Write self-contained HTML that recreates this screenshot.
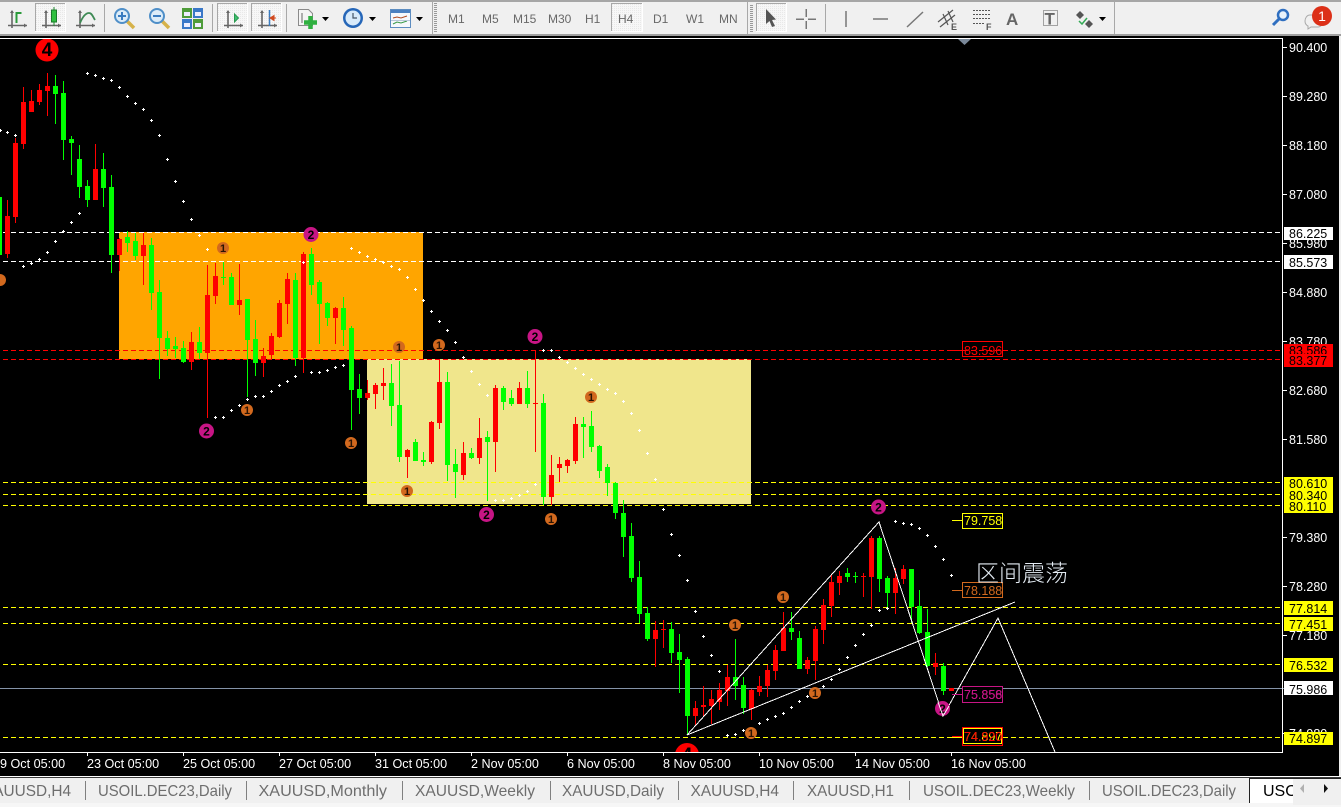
<!DOCTYPE html>
<html><head><meta charset="utf-8"><title>XAUUSD,H4</title>
<style>
html,body{margin:0;padding:0;background:#000;width:1341px;height:807px;overflow:hidden}
svg{display:block}
text{font-family:"Liberation Sans","Noto Sans CJK SC",sans-serif}
.ax{font-size:12.5px;fill:#fff}
.dt{font-size:12.6px;fill:#fff}
.bk{font-size:12.5px;fill:#000}
.tf{font-size:12px;fill:#686868}
.tab{font-size:16px;fill:#6e6e6e}
.n{font-size:11px;font-weight:bold;text-anchor:middle}
</style></head><body>
<svg width="1341" height="807" viewBox="0 0 1341 807" xmlns="http://www.w3.org/2000/svg">
<defs>
<marker id="d2" markerUnits="userSpaceOnUse" markerWidth="4" markerHeight="4" refX="1" refY="1" overflow="visible"><path d="M0 1.5h3M1.5 0v3" stroke="#fff" fill="none"/></marker>
<g id="a"><path d="M4 1v17M0 15.500h19" stroke="#666" stroke-width="1.600" fill="none"/><path d="M2 3l2-3 2 3zM16 13.500l3 2-3 2z" fill="#666"/></g>
<pattern id="dith" width="2" height="2" patternUnits="userSpaceOnUse"><rect width="2" height="2" fill="#f7f7f7"/><rect width="1" height="1" fill="#e8e8e8"/></pattern>
<clipPath id="cc"><rect x="0" y="39" width="1282" height="713"/></clipPath>
</defs>

<rect width="1341" height="807" fill="#000"/>

<g clip-path="url(#cc)">
<rect x="119" y="232" width="304" height="127" fill="#ffa500"/>
<rect x="367" y="359" width="384" height="145" fill="#f0e68c"/>

<g fill="none" stroke-dasharray="5 3" shape-rendering="crispEdges">
<path d="M3 232.500H1282M3 261.500H1282" stroke="#fff"/>
<path d="M3 350.500H1282M3 359.500H1282" stroke="#f00"/>
<path d="M3 482.500H1282M3 494.500H1282M3 505.500H1282M3 607.500H1282M3 623.500H1282M3 664.500H1282M3 737.500H1282" stroke="#ff0"/>
</g>
<path d="M0 688.500H1282" stroke="#8493a8" shape-rendering="crispEdges"/>

<g fill="none" shape-rendering="crispEdges">
<path stroke="#0f0" d="M-.5 190V255M55.500 75V124M63.500 81V160M71.500 136V175M79.500 145V198M87.500 180V207M103.500 153V207M111.500 175V273M127.500 231V252M135.500 233V260M151.500 238V310M159.500 280V379M167.500 331V356M175.500 337V358M183.500 341V363M199.500 327V359M223.500 262V285M231.500 273V305M247.500 299V397M255.500 320V376M295.500 273V366M311.500 248V295M319.500 280V344M327.500 302V326M343.500 297V346M351.500 326V430M359.500 374V414M391.500 364V426M399.500 361V462M415.500 439V461M423.500 452V466M447.500 372V481M455.500 449V498M471.500 448V459M487.500 431V501M503.500 386V410M511.500 390V406M527.500 371V408M543.500 394V505M583.500 417V458M591.500 411V452M599.500 445V478M607.500 464V496M615.500 482V519M623.500 500V557M631.500 523V582M639.500 561V623M647.500 607V641M671.500 622V663M679.500 634V693M687.500 657V735M735.500 639V700M743.500 677V714M791.500 612V640M799.500 631V669M847.500 568V582M855.500 572V583M879.500 536V592M887.500 576V607M911.500 569V623M919.500 590V634M927.500 609V667M943.500 663V695"/>
<path stroke="#f00" d="M7.500 200V258M15.500 138V223M23.500 87V149M31.500 90V112M39.500 84V105M47.500 73V116M95.500 144V200M119.500 238V271M143.500 233V285M191.500 332V370M207.500 265V418M215.500 263V304M239.500 264V315M263.500 348V377M271.500 333V360M279.500 300V338M287.500 273V324M303.500 252V373M335.500 307V344M367.500 380V400M375.500 383V409M383.500 368V400M407.500 449V478M431.500 421V464M439.500 359V429M463.500 442V480M479.500 418V464M495.500 385V472M519.500 382V404M535.500 350V452M551.500 455V505M559.500 457V482M567.500 459V473M575.500 417V464M655.500 621V667M663.500 620V648M695.500 701V726M703.500 686V717M711.500 690V724M719.500 683V710M727.500 665V706M751.500 689V720M759.500 676V696M767.500 665V697M775.500 645V680M783.500 612V651M807.500 657V674M815.500 626V680M823.500 599V644M831.500 575V617M839.500 571V595M863.500 573V597M871.500 536V609M895.500 568V614M903.500 565V584M935.500 653V675"/>
<path stroke="#0f0" stroke-width="5" d="M-.5 197V255M55.500 86V94M63.500 93V140M71.500 139V143M79.500 159V187M87.500 186V200M103.500 169V188M111.500 187V255M127.500 237V243M135.500 241V256M151.500 245V293M159.500 292V338M167.500 338V349M175.500 346V349M183.500 348V362M199.500 342V353M231.500 277V305M247.500 299V340M255.500 339V363M295.500 280V358M311.500 254V285M319.500 282V304M327.500 303V318M343.500 308V330M351.500 328V390M359.500 389V398M391.500 383V406M399.500 405V457M415.500 442V461M423.500 460V462M447.500 382V465M455.500 464V472M471.500 453V458M487.500 437V442M503.500 388V402M511.500 398V404M527.500 388V404M543.500 403V497M583.500 424V427M591.500 426V447M599.500 446V471M607.500 467V483M615.500 483V513M623.500 513V537M631.500 536V578M639.500 577V614M647.500 613V639M671.500 629V653M679.500 652V660M687.500 659V716M735.500 677V686M743.500 685V708M791.500 628V632M799.500 638V669M847.500 573V577M879.500 538V579M887.500 578V593M911.500 569V607M919.500 606V633M927.500 632V666M943.500 666V691"/>
<path stroke="#0f0" stroke-width="5" d="M223.500 277V278M855.500 576V577"/>
<path stroke="#f00" stroke-width="5" d="M7.500 216V254M15.500 143V217M23.500 102V144M31.500 101V112M39.500 90V102M47.500 86V91M95.500 169V200M119.500 239V255M143.500 245V256M191.500 342V362M207.500 295V353M215.500 276V296M239.500 300V305M263.500 356V363M271.500 336V355M279.500 303V337M287.500 279V304M303.500 254V358M335.500 308V318M367.500 393V398M375.500 385V394M383.500 383V386M407.500 450V457M431.500 422V462M439.500 382V423M463.500 453V475M479.500 438V458M495.500 388V442M519.500 388V404M535.500 403V404M551.500 475V497M559.500 464V468M567.500 460V466M575.500 424V461M655.500 630V639M663.500 629V630M695.500 708V716M703.500 705V707M711.500 699V706M719.500 690V702M727.500 677V691M751.500 690V709M759.500 686V692M767.500 670V686M775.500 650V671M783.500 628V651M807.500 660V669M815.500 629V661M823.500 605V630M831.500 582V606M839.500 576V583M863.500 576V577M871.500 538V577M895.500 578V593M903.500 569V579M935.500 663V667M951.500 688V691"/>
</g>

<path fill="none" stroke="none" marker-start="url(#d2)" marker-mid="url(#d2)" marker-end="url(#d2)" d="M0 130L7 132L15 135M87 73L95 75L103 78L111 80L119 87L127 96L135 103L143 109L151 120L159 135L167 159L175 181L183 201L191 219L199 235L207 249M23 266L31 263L39 259L47 252L55 241L63 231L71 222L79 213M215 417L223 417L231 410L239 405L247 399L255 396L263 396L271 391L279 385L287 381L295 376L303 262L311 372L319 372L327 370L335 367L343 365M351 248L359 252L367 256L375 259L383 262L391 266L399 269L407 277L415 289L423 300L431 311L439 321L447 330L455 342L463 357L471 371L479 384L487 395M495 500L503 500L511 498L519 495L527 491L535 484M543 350L551 350L559 357L567 362L575 368L583 374L591 379L599 384L607 389L615 393L623 401L631 413L639 430L647 453L655 479L663 509L671 534L679 555L687 580L695 611L703 636L711 655L719 671M727 735L735 734L743 730L759 723L767 719L775 716L783 713L791 707L799 701L807 696L823 686L831 679L839 669L847 657L855 645L863 634L871 625L879 610L887 608M895 521L903 523L911 524L919 528L927 535L935 546L943 559L951 575"/>

<g fill="none" stroke="#fff" shape-rendering="crispEdges">
<path d="M687 735L879 522L943 716L998 618L1055 752"/>
<path d="M687 735L1015 602"/>
</g>

<g>
<circle cx="47" cy="50" r="11.500" fill="#f00"/><text x="47" y="56" font-size="19" font-weight="bold" text-anchor="middle" fill="#000">4</text>
<circle cx="687" cy="755" r="12" fill="#f00"/><text x="687" y="761" font-size="19" font-weight="bold" text-anchor="middle" fill="#000">4</text>
</g>
<g fill="#c71585">
<circle cx="311" cy="234.500" r="7.500"/><circle cx="206.500" cy="431" r="7.500"/><circle cx="535" cy="336.500" r="7.500"/><circle cx="486.500" cy="514.500" r="7.500"/><circle cx="878.500" cy="507" r="7.500"/><circle cx="942.500" cy="708.500" r="7.500"/>
</g>
<g>
<text class="n" style="font-size:12px" x="311" y="239">2</text><text class="n" style="font-size:12px" x="206.500" y="435.500">2</text><text class="n" style="font-size:12px" x="535" y="341">2</text><text class="n" style="font-size:12px" x="486.500" y="519">2</text><text class="n" style="font-size:12px" x="878.500" y="511.500">2</text><text class="n" style="font-size:12px" x="942.500" y="713">2</text>
</g>
<path d="M943 716L938 702M943 716L949 706" stroke="#fff" fill="none"/>
<g fill="#d2691e">
<circle cx="223" cy="248" r="6"/><circle cx="399" cy="347" r="6"/><circle cx="439" cy="345" r="6"/><circle cx="247" cy="410" r="6"/><circle cx="351" cy="443" r="6"/><circle cx="0" cy="280" r="6"/><circle cx="591" cy="397" r="6"/><circle cx="407" cy="491" r="6"/><circle cx="551" cy="519" r="6"/><circle cx="783" cy="597" r="6"/><circle cx="735" cy="625" r="6"/><circle cx="815" cy="693" r="6"/><circle cx="751" cy="733" r="6"/>
</g>
<g fill="#2a1404">
<text class="n" x="223" y="252">1</text><text class="n" x="399" y="351">1</text><text class="n" x="439" y="349">1</text><text class="n" x="247" y="414">1</text><text class="n" x="351" y="447">1</text><text class="n" x="591" y="401">1</text><text class="n" x="407" y="495">1</text><text class="n" x="551" y="523">1</text><text class="n" x="783" y="601">1</text><text class="n" x="735" y="629">1</text><text class="n" x="815" y="697">1</text><text class="n" x="751" y="733" dy="4">1</text>
</g>

<!-- inner price labels -->
<g shape-rendering="crispEdges" fill="#000" stroke-width="1">
<path d="M952 350.500h10" stroke="#f00"/><rect x="962.500" y="341.500" width="40" height="15" stroke="#f00" fill="none"/>
<path d="M952 520.500h10" stroke="#ff0"/><rect x="962.500" y="513.500" width="40" height="15" stroke="#ff0"/>
<path d="M952 590.500h10" stroke="#d2691e"/><rect x="962.500" y="582.500" width="40" height="15" stroke="#d2691e"/>
<path d="M952 694.500h10" stroke="#c71585"/><rect x="962.500" y="686.500" width="40" height="16" stroke="#c71585"/>
<path d="M952 736.500h10" stroke="#f00"/><path d="M952 737.500h10" stroke="#ff0"/>
<rect x="962.500" y="727.500" width="40" height="18" stroke="#f00"/>
<rect x="963.500" y="728.500" width="38" height="15" stroke="#ff0"/>
</g>
<text x="964" y="355" font-size="12.500" fill="#f00">83.596</text>
<text x="964" y="525" font-size="12.500" fill="#ff0">79.758</text>
<text x="964" y="595" font-size="12.500" fill="#d2691e">78.188</text>
<text x="964" y="699" font-size="12.500" fill="#c71585">75.858</text>
<text x="964" y="699" font-size="12.500" fill="#c71585">75.856</text>
<text x="964" y="741" font-size="12.500" fill="#ff0">74.897</text>
<text x="964" y="741" font-size="12.500" fill="#f00">74.920</text>

<text x="976" y="581" font-size="23" fill="#e4ecf4" style="font-family:'Noto Sans CJK SC','Liberation Sans',sans-serif;font-weight:300">区间震荡</text>
<path d="M958 39h13l-6.500 6z" fill="#7a8899"/>
</g>

<!-- frame -->
<path d="M0 38.500H1283M1282.500 38V753M0 752.500H1283" stroke="#fff" shape-rendering="crispEdges" fill="none"/>

<!-- price axis -->
<path d="M1283 47.500h4M1283 96.500h4M1283 145.500h4M1283 194.500h4M1283 243.500h4M1283 292.500h4M1283 341.500h4M1283 390.500h4M1283 439.500h4M1283 537.500h4M1283 586.500h4M1283 635.500h4M1283 733.500h4" stroke="#fff" shape-rendering="crispEdges"/>
<g>
<text class="ax" x="1289" y="52">90.400</text><text class="ax" x="1289" y="101">89.280</text><text class="ax" x="1289" y="150">88.180</text><text class="ax" x="1289" y="199">87.080</text><text class="ax" x="1289" y="248">85.980</text><text class="ax" x="1289" y="297">84.880</text><text class="ax" x="1289" y="346">83.780</text><text class="ax" x="1289" y="395">82.680</text><text class="ax" x="1289" y="444">81.580</text><text class="ax" x="1289" y="542">79.380</text><text class="ax" x="1289" y="591">78.280</text><text class="ax" x="1289" y="640">77.180</text><text class="ax" x="1289" y="738">74.980</text>
</g>
<g shape-rendering="crispEdges">
<rect x="1284" y="227" width="49" height="13" fill="#fff"/><rect x="1284" y="255" width="49" height="14" fill="#fff"/>
<rect x="1284" y="344" width="49" height="11" fill="#f00"/>
</g>
<text class="bk" x="1289" y="238">86.225</text><text class="bk" x="1289" y="267">85.573</text>
<text class="bk" x="1289" y="355">83.586</text>
<rect x="1284" y="354" width="49" height="13" fill="#f00" shape-rendering="crispEdges"/><text class="bk" x="1289" y="365">83.377</text>
<rect x="1284" y="477" width="49" height="36" fill="#ff0" shape-rendering="crispEdges"/>
<text class="bk" x="1289" y="488">80.610</text><text class="bk" x="1289" y="500">80.340</text><text class="bk" x="1289" y="511">80.110</text>
<g fill="#ff0" shape-rendering="crispEdges"><rect x="1284" y="601" width="49" height="14"/><rect x="1284" y="617" width="49" height="14"/><rect x="1284" y="658" width="49" height="14"/><rect x="1284" y="732" width="49" height="13"/></g>
<rect x="1284" y="681" width="49" height="14" fill="#fff" shape-rendering="crispEdges"/>
<path d="M1283 688.500h1" stroke="#8493a8"/>
<text class="bk" x="1289" y="613">77.814</text><text class="bk" x="1289" y="629">77.451</text><text class="bk" x="1289" y="670">76.532</text><text class="bk" x="1289" y="694">75.986</text><text class="bk" x="1289" y="743">74.897</text>

<!-- date axis -->
<path d="M87.500 753v3M183.500 753v3M279.500 753v3M375.500 753v3M471.500 753v3M567.500 753v3M663.500 753v3M759.500 753v3M855.500 753v3M951.500 753v3" stroke="#fff" shape-rendering="crispEdges"/>
<g>
<text class="dt" x="-7" y="768">19 Oct 05:00</text><text class="dt" x="87" y="768">23 Oct 05:00</text><text class="dt" x="183" y="768">25 Oct 05:00</text><text class="dt" x="279" y="768">27 Oct 05:00</text><text class="dt" x="375" y="768">31 Oct 05:00</text><text class="dt" x="471" y="768">2 Nov 05:00</text><text class="dt" x="567" y="768">6 Nov 05:00</text><text class="dt" x="663" y="768">8 Nov 05:00</text><text class="dt" x="759" y="768">10 Nov 05:00</text><text class="dt" x="855" y="768">14 Nov 05:00</text><text class="dt" x="951" y="768">16 Nov 05:00</text>
</g>

<!-- right edge -->
<rect x="1339" y="36" width="2" height="742" fill="#f0f0f0"/>

<!-- tabs -->
<rect x="0" y="776" width="1341" height="31" fill="#f0f0f0"/>
<rect x="0" y="776" width="1341" height="1" fill="#fff"/>
<rect x="0" y="777" width="1341" height="1" fill="#3a3a3a"/>
<rect x="0" y="803" width="1341" height="4" fill="#f6f6f6"/>
<path d="M85.500 781v19M246.500 781v19M402.500 781v19M550.500 781v19M678.500 781v19M793.500 781v19M909.500 781v19M1089.500 781v19" stroke="#808080" shape-rendering="crispEdges"/>
<text class="tab" x="-17" y="796" textLength="88" lengthAdjust="spacingAndGlyphs">XAUUSD,H4</text>
<text class="tab" x="98" y="796" textLength="134" lengthAdjust="spacingAndGlyphs">USOIL.DEC23,Daily</text>
<text class="tab" x="258.500" y="796" textLength="128.500" lengthAdjust="spacingAndGlyphs">XAUUSD,Monthly</text>
<text class="tab" x="415" y="796" textLength="120" lengthAdjust="spacingAndGlyphs">XAUUSD,Weekly</text>
<text class="tab" x="562" y="796" textLength="102" lengthAdjust="spacingAndGlyphs">XAUUSD,Daily</text>
<text class="tab" x="690.500" y="796" textLength="88.500" lengthAdjust="spacingAndGlyphs">XAUUSD,H4</text>
<text class="tab" x="807" y="796" textLength="87" lengthAdjust="spacingAndGlyphs">XAUUSD,H1</text>
<text class="tab" x="923" y="796" textLength="152" lengthAdjust="spacingAndGlyphs">USOIL.DEC23,Weekly</text>
<text class="tab" x="1102" y="796" textLength="134" lengthAdjust="spacingAndGlyphs">USOIL.DEC23,Daily</text>
<path d="M1249.500 803V778.500H1341" stroke="#222" fill="#fff" shape-rendering="crispEdges"/>
<rect x="1250" y="779" width="91" height="24" fill="#fff"/>
<text x="1263" y="796" font-size="16" fill="#000">USOIL.DEC23,H4</text>
<rect x="1293" y="779" width="48" height="26" fill="#f0f0f0"/>
<path d="M1304 784v9l-4-4.500z" fill="#b0b0b0"/><path d="M1324 784v9l4-4.500z" fill="#111"/>

<!-- toolbar -->
<rect x="0" y="0" width="1341" height="36" fill="#f0f0f0"/>
<rect x="0" y="0" width="1341" height="2" fill="#a6a6a6"/>
<rect x="0" y="34" width="1341" height="2" fill="#a0a0a0"/>

<!-- pressed buttons -->
<g shape-rendering="crispEdges">
<rect x="35.500" y="3.500" width="30" height="28" fill="url(#dith)" stroke="#fff"/><path d="M35.500 31V3.500H65" stroke="#a8a8a8" fill="none"/>
<rect x="217.500" y="3.500" width="30" height="28" fill="url(#dith)" stroke="#fff"/><path d="M217.500 31V3.500H247" stroke="#a8a8a8" fill="none"/>
<rect x="251.500" y="3.500" width="30" height="28" fill="url(#dith)" stroke="#fff"/><path d="M251.500 31V3.500H281" stroke="#a8a8a8" fill="none"/>
<rect x="611.500" y="3.500" width="31" height="28" fill="url(#dith)" stroke="#fff"/><path d="M611.500 31V3.500H642" stroke="#a8a8a8" fill="none"/>
<rect x="756.500" y="3.500" width="30" height="28" fill="url(#dith)" stroke="#fff"/><path d="M756.500 31V3.500H786" stroke="#a8a8a8" fill="none"/>
</g>
<!-- separators -->
<path d="M104.500 4v28M212.500 4v28M286.500 4v28M432.500 2v32M747.500 2v32M825.500 4v28M1114.500 2v32" stroke="#a8a8a8" shape-rendering="crispEdges"/>
<path d="M435.500 3v30M751.500 5v27" stroke="#999" stroke-dasharray="1 1" stroke-width="3" shape-rendering="crispEdges"/>

<!-- chart type icons -->
<use href="#a" x="8" y="10"/><path d="M16.500 23V13h5" stroke="#2a9a3a" stroke-width="2" fill="none"/>
<use href="#a" x="42" y="10"/><path d="M54 7v19" stroke="#228a30"/><rect x="51.500" y="10" width="5" height="12" fill="#2fc040" stroke="#1a7a2a"/>
<use href="#a" x="76" y="10"/><path d="M80 23c3-7 6-10 9-10 3 0 4 4 6 7" stroke="#3e8a55" stroke-width="1.800" fill="none"/>
<!-- zoom in / out -->
<g fill="none">
<path d="M127 21l7 7" stroke="#d6b24a" stroke-width="3.500"/>
<circle cx="122" cy="16" r="7" fill="#dcecf8" stroke="#4f8fc8" stroke-width="2"/><path d="M118 16h8M122 12v8" stroke="#3a7cc0" stroke-width="2"/>
<path d="M162 21l7 7" stroke="#d6b24a" stroke-width="3.500"/>
<circle cx="157" cy="16" r="7" fill="#dcecf8" stroke="#4f8fc8" stroke-width="2"/><path d="M153 16h8" stroke="#3a7cc0" stroke-width="2"/>
</g>
<!-- tile -->
<g shape-rendering="crispEdges">
<rect x="182" y="8" width="10" height="10" fill="#4f9c3a"/><rect x="193" y="8" width="10" height="10" fill="#3a78c8"/><rect x="182" y="19" width="10" height="10" fill="#3a78c8"/><rect x="193" y="19" width="10" height="10" fill="#4f9c3a"/>
<rect x="184" y="12" width="6" height="4" fill="#eef"/><rect x="195" y="12" width="6" height="4" fill="#eef"/><rect x="184" y="23" width="6" height="4" fill="#eef"/><rect x="195" y="23" width="6" height="4" fill="#eef"/>
</g>
<!-- scroll icons -->
<use href="#a" x="224" y="10"/><path d="M234.500 14v8l4-4z" fill="#3fc070" stroke="#2a9a50"/>
<use href="#a" x="258" y="10"/><path d="M269.500 10v16" stroke="#3a7cc0" stroke-width="1.500"/><path d="M270 18h6M274 15.500l-4 2.500 4 2.500z" stroke="#d04a20" fill="#d04a20"/>
<!-- new chart -->
<path d="M298.500 9.500h10l4 4v12h-14z" fill="#f4f4f4" stroke="#8a8a8a"/>
<path d="M302 13v10" stroke="#666"/><path d="M310.500 16v13M304 22.500h13" stroke="#2fb040" stroke-width="4.500"/>
<path d="M322 17h7l-3.500 4z" fill="#000"/>
<!-- clock -->
<circle cx="353" cy="18" r="10" fill="#2566b8"/><circle cx="353" cy="18" r="7.500" fill="#d8eafa"/><path d="M353 13v5h4" stroke="#456" stroke-width="1.200" fill="none"/>
<path d="M369 17h7l-3.500 4z" fill="#000"/>
<!-- indicators -->
<rect x="390.500" y="9.500" width="20" height="18" fill="#f5f8fc" stroke="#5c8cc0"/><rect x="391" y="10" width="19" height="3" fill="#4a80c0"/><path d="M393 18l4-1 4 1 6-2" stroke="#b04a20" fill="none"/><path d="M393 24l4-2 4 1 6-2" stroke="#3a9a4a" fill="none"/><path d="M391 20.500h19" stroke="#b8c8d8"/>
<path d="M416 17h7l-3.500 4z" fill="#000"/>

<!-- timeframes -->
<text class="tf" x="448" y="23">M1</text><text class="tf" x="482" y="23">M5</text><text class="tf" x="513" y="23">M15</text><text class="tf" x="548" y="23">M30</text><text class="tf" x="585" y="23">H1</text><text class="tf" x="618" y="23">H4</text><text class="tf" x="653" y="23">D1</text><text class="tf" x="686" y="23">W1</text><text class="tf" x="719" y="23">MN</text>

<!-- drawing tools -->
<path d="M766 9l10 10.500-4 .5 3 6-3 1-2.500-6-3.500 3z" fill="#555"/>
<path d="M796 19h8M808 19h8M806 9v8M806 21v8" stroke="#777" shape-rendering="crispEdges" stroke-width="1.500"/>
<path d="M846 11v16" stroke="#777" stroke-width="1.500"/>
<path d="M873 19h15" stroke="#777" stroke-width="1.500"/>
<path d="M907 27L923 12" stroke="#777" stroke-width="1.500"/>
<path d="M938 22l15-12M940 27l15-12M943 14l5 11M948 11l5 11" stroke="#555" fill="none" stroke-width="1.200"/>
<text x="951" y="30" font-size="9" font-weight="bold" fill="#555">E</text>
<path d="M973 10.500h18M973 14.500h18M973 18.500h18M973 23.500h12" stroke="#555" stroke-dasharray="2 1" fill="none" shape-rendering="crispEdges"/>
<text x="986" y="30" font-size="9" font-weight="bold" fill="#555">F</text>
<text x="1006" y="25" font-size="17" font-weight="bold" fill="#666">A</text>
<rect x="1043.500" y="10.500" width="14" height="15" fill="none" stroke="#555" stroke-dasharray="1 1" shape-rendering="crispEdges"/>
<text x="1044.500" y="24.500" font-size="17" font-weight="bold" fill="#666">T</text>
<path d="M1080 11l4 4-4 4-4-4zM1089 20l4 4-4 4-4-4z" fill="#555"/><path d="M1079 21l3 3 5-6" stroke="#3a5" fill="none" stroke-width="1.500"/>
<path d="M1099 17h7l-3.500 4z" fill="#000"/>

<!-- search -->
<circle cx="1283" cy="15" r="5" fill="#e8f2fb" stroke="#2f6fc0" stroke-width="2.500"/><path d="M1279 19l-6 6" stroke="#2f6fc0" stroke-width="3"/>
<!-- chat -->
<path d="M1310 15h8c4 0 5 3 5 6s-2 6-5 6h-7l-3 2v-3c-2-1-3-3-3-5 0-3 2-6 5-6z" fill="#f0f0f0" stroke="#a8a8a8"/>
<circle cx="1322" cy="16" r="10" fill="#dc3018"/>
<text x="1322" y="21" font-size="14" text-anchor="middle" fill="#fff">1</text>
</svg>
</body></html>
